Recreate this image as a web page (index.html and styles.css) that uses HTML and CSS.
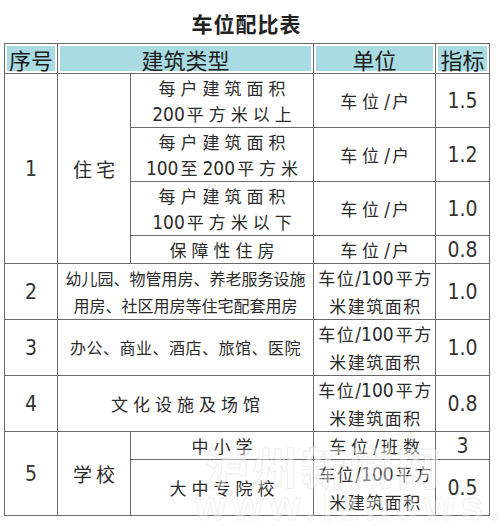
FILE: index.html
```html
<!DOCTYPE html>
<html lang="zh-CN">
<head>
<meta charset="utf-8">
<link rel="stylesheet" href="styles.css">
</head>
<body>
<div class="page">
  <h1 class="title">车位配比表</h1>
  <table class="ratio">
    <colgroup>
      <col class="c1"><col class="c2"><col class="c3"><col class="c4"><col class="c5">
    </colgroup>
    <thead>
      <tr class="h-head">
        <th>序号</th>
        <th colspan="2">建筑类型</th>
        <th>单位</th>
        <th>指标</th>
      </tr>
    </thead>
    <tbody>
      <tr class="h-tall">
        <td rowspan="4" class="num">1</td>
        <td rowspan="4" class="cat">住宅</td>
        <td class="sp">每户建筑面积<br><span class="d">200</span>平方米以上</td>
        <td class="sp">车位<span class="d">/</span>户</td>
        <td class="num">1.5</td>
      </tr>
      <tr class="h-tall">
        <td class="sp">每户建筑面积<br><span class="d">100</span>至<span class="d">200</span>平方米</td>
        <td class="sp">车位<span class="d">/</span>户</td>
        <td class="num">1.2</td>
      </tr>
      <tr class="h-tall">
        <td class="sp">每户建筑面积<br><span class="d">100</span>平方米以下</td>
        <td class="sp">车位<span class="d">/</span>户</td>
        <td class="num">1.0</td>
      </tr>
      <tr class="h-short">
        <td class="sp">保障性住房</td>
        <td class="sp">车位<span class="d">/</span>户</td>
        <td class="num">0.8</td>
      </tr>
      <tr class="h-tall2">
        <td class="num">2</td>
        <td colspan="2" class="dense">幼儿园、物管用房、养老服务设施<br>用房、社区用房等住宅配套用房</td>
        <td class="unit">车位<span class="d">/100</span>平方<br>米建筑面积</td>
        <td class="num">1.0</td>
      </tr>
      <tr class="h-tall">
        <td class="num">3</td>
        <td colspan="2" class="dense wide">办公、商业、酒店、旅馆、医院</td>
        <td class="unit">车位<span class="d">/100</span>平方<br>米建筑面积</td>
        <td class="num">1.0</td>
      </tr>
      <tr class="h-tall2">
        <td class="num">4</td>
        <td colspan="2" class="sp">文化设施及场馆</td>
        <td class="unit">车位<span class="d">/100</span>平方<br>米建筑面积</td>
        <td class="num">0.8</td>
      </tr>
      <tr class="h-short">
        <td rowspan="2" class="num">5</td>
        <td rowspan="2" class="cat">学校</td>
        <td class="sp">中小学</td>
        <td class="sp">车位<span class="d">/</span>班数</td>
        <td class="num">3</td>
      </tr>
      <tr class="h-tall">
        <td class="sp">大中专院校</td>
        <td class="unit">车位<span class="d">/100</span>平方<br>米建筑面积</td>
        <td class="num">0.5</td>
      </tr>
    </tbody>
  </table>
  <div class="watermark" aria-hidden="true">
    <span class="wm-big">泸州新闻网</span>
    <span class="wm-small">www.lznews.cn</span>
  </div>
</div>
</body>
</html>
```

FILE: styles.css
```css
html, body {
  margin: 0;
  padding: 0;
  background: #fff;
}

.page {
  position: relative;
  width: 500px;
  height: 526px;
  overflow: hidden;
  padding: 12px 0 0 4px;
  box-sizing: border-box;
  font-family: "Noto Sans CJK SC", "Noto Sans", sans-serif;
  color: #2b2b2b;
}

.title {
  margin: 0 0 8px 0;
  width: 485px;
  text-align: center;
  font-size: 21px;
  line-height: 23px;
  font-weight: 700;
  letter-spacing: 1px;
  color: #222;
}

.ratio {
  border-collapse: collapse;
  table-layout: fixed;
  width: 485px;
  border: 1.5px solid #6a6a6a;
}

.c1 { width: 53px; }
.c2 { width: 73px; }
.c3 { width: 183px; }
.c4 { width: 122px; }
.c5 { width: 54px; }

.ratio th,
.ratio td {
  border: 1.5px solid #6a6a6a;
  padding: 0;
  text-align: center;
  vertical-align: middle;
  white-space: nowrap;
}

.ratio th {
  height: 29px;
  background: #a9dce2;
  box-shadow: inset 0 0 0 2px #fff;
  font-size: 22px;
  line-height: 26px;
  font-weight: 400;
  color: #1e1e1e;
}

.h-tall td { height: 53px; }
.h-tall2 td { height: 55px; }
.h-short td { height: 27px; }

.ratio td {
  font-size: 17px;
  line-height: 26px;
  font-weight: 400;
  color: #2b2b2b;
}

.ratio td.sp {
  letter-spacing: 5px;
  padding-left: 5px;
}

.ratio td.cat {
  letter-spacing: 4px;
  font-size: 19px;
  padding-left: 4px;
}

.ratio td.dense {
  font-size: 16px;
  line-height: 27px;
  letter-spacing: 0;
}

.ratio td.dense.wide {
  letter-spacing: 0.5px;
}

.ratio td.unit {
  line-height: 27px;
  letter-spacing: 1.5px;
  padding-left: 2px;
}

.d {
  font-family: "Liberation Sans Narrow", "DejaVu Sans Condensed", "Liberation Sans", sans-serif;
  font-size: 19px;
  letter-spacing: 0;
  margin-right: 2px;
}

.ratio td.num {
  font-family: "Liberation Sans Narrow", "DejaVu Sans Condensed", "Liberation Sans", sans-serif;
  font-size: 21px;
  color: #333;
}

.watermark {
  position: absolute;
  left: 205px;
  top: 444px;
  width: 300px;
  pointer-events: none;
  display: flex;
  flex-direction: column;
  align-items: flex-start;
}

.wm-big {
  font-family: "Noto Sans CJK SC", sans-serif;
  font-size: 44px;
  line-height: 44px;
  font-weight: 900;
  letter-spacing: 4px;
  color: rgba(255, 255, 255, 0.45);
  -webkit-text-stroke: 1px rgba(150, 150, 150, 0.18);
}

.wm-small {
  font-family: "Liberation Sans", sans-serif;
  font-size: 40px;
  line-height: 36px;
  font-weight: 700;
  letter-spacing: 6px;
  margin-left: -10px;
  color: rgba(255, 255, 255, 0.4);
  -webkit-text-stroke: 1px rgba(150, 150, 150, 0.15);
}
```
